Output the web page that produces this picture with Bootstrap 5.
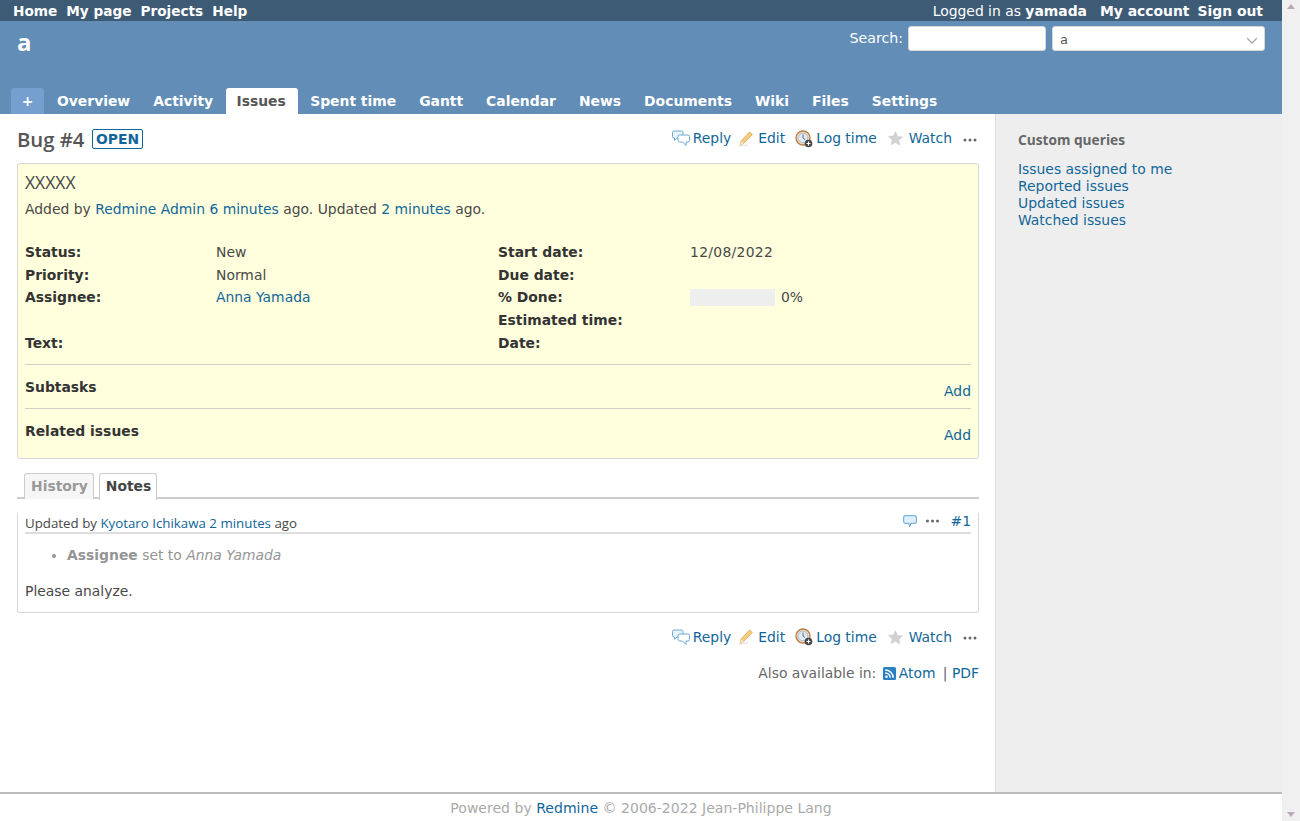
<!DOCTYPE html>
<html lang="en">
<head>
<meta charset="utf-8">
<title>Bug #4</title>
<link href="https://cdn.jsdelivr.net/npm/bootstrap@5.3.0/dist/css/bootstrap.min.css" rel="stylesheet">
<style>
html,body{height:821px;overflow:hidden}
body{font-family:"DejaVu Sans",Verdana,sans-serif;font-size:13.9px;line-height:17px;color:#484848;background:#fff}
a{color:#169;text-decoration:none}
.rm-shell{height:821px}
.rm-page{width:1282px;height:821px}
.rm-bar{width:18px;background:#f0f0f0;padding:4px 0}
.rm-up{width:0;height:0;border:4px solid transparent;border-top:0;border-bottom:5px solid #b9a9b9}
.rm-down{width:0;height:0;border:4px solid transparent;border-bottom:0;border-top:5px solid #b9a9b9}
.rm-top{height:21px;background:#3e5b76;color:#fff;padding:0 19px 0 13px;line-height:23px}
.rm-top a{color:#fff;font-weight:700}
.rm-menu{gap:9px;font-size:13.65px}
.rm-user{gap:8px}
.rm-logged{margin-right:5px}
.rm-head{height:93px;background:#628db6;color:#fff}
.rm-title{font-family:"Open Sans",sans-serif;font-size:24px;font-weight:700;line-height:32px;margin-top:5px;padding-left:17px}
.rm-search{margin-top:5px;padding-right:17px}
.rm-label{margin-top:4px;margin-right:5px;font-size:14.2px}
.rm-input{width:138px;height:25px;background:#fff;border:1px solid #d7d7d7;border-radius:3px;margin-right:6px}
.rm-select{width:213px;height:25px;background:#fff;border:1px solid #d7d7d7;border-radius:3px;color:#555;padding:0 7px;line-height:25px;font-size:13px}
.rm-tabs{padding-left:11px;height:26px;gap:3px}
.rm-tabs a{color:#fff;font-weight:700;padding:0 10px;line-height:27px;display:block;border-radius:3px 3px 0 0}
.rm-tabs a.rm-on{background:#fff;color:#555;width:72px;text-align:center;margin-right:-2px;padding:0 2px 0 0}
.rm-tabs a.rm-on+a{padding-left:11px}
.rm-tabs a.rm-plus{background:#759fcf;width:33px;padding:0;text-align:center}
.rm-body{height:678px}
.rm-main{width:995px;padding:0 16px 0 17px}
.rm-side{width:287px;background:#eee;border-left:1px solid #ddd;padding:17px 22px}
.rm-side h3{font-family:"Open Sans",sans-serif;font-size:13.7px;font-weight:700;color:#666;line-height:18px;margin:0 0 12px}
.rm-side a{display:block;line-height:17px}
.rm-hrow{height:39px;padding-top:10px}
.rm-h2{font-family:"Open Sans",sans-serif;font-size:20.3px;font-weight:600;color:#555;margin:0;line-height:26px}
.rm-badge{border:1px solid #169;color:#169;font-weight:700;line-height:18px;padding:0 2.500px;border-radius:2px;margin:1px 0 0 8px}
.rm-act{display:inline-flex;align-items:center;gap:3px}
.rm-act svg{display:block}
.rm-act.rm-e{gap:5px;margin-left:7px}
.rm-act.rm-l{margin-left:10px}
.rm-act.rm-w{margin-left:11px;gap:6px}
.rm-more{margin:2px 2px 0 11px}
.rm-box{background:#ffd;border:1px solid #d7d7d7;border-radius:3px;padding:6px 7px;margin-top:10px;height:296px}
.rm-subject{font-family:"Open Sans",sans-serif;font-size:17.5px;line-height:24px;color:#444;height:31px}
.rm-attrs{margin-top:23px;display:grid;grid-template-columns:191px 282px 192px 1fr;grid-auto-rows:22.8px;align-items:center}
.rm-attrs b{font-weight:700;color:#333}
.rm-date{letter-spacing:.3px}
.rm-prog{display:inline-block;width:85px;height:17px;background:#eee;vertical-align:top;margin-right:6px}
.rm-rule{border-top:1px solid #d0d0c8;margin-top:9px;height:44px;padding-top:14px}
.rm-rule+.rm-rule{margin-top:0}
.rm-rule b{color:#333}
.rm-rule a{padding-top:4px}
.rm-tabbar{margin-top:14px;border-bottom:2px solid #ccc;height:26px;padding-left:7px;gap:5px}
.rm-tab{height:26px;border:1px solid #ccc;border-bottom:0;border-radius:3px 3px 0 0;padding:0 5px 0 6px;font-weight:700;color:#999;line-height:25px;background:#f6f6f6}
.rm-tab.rm-on{background:#fff;color:#444;height:27px}
.rm-note{margin-top:14px;border:1px solid #d7d7d7;border-top:0;border-radius:0 0 3px 3px;height:100px;padding:0 7px}
.rm-nh{border-bottom:2px solid #ddd;height:21px;line-height:20px}
.rm-who{font-family:"Open Sans",sans-serif;font-size:13.3px}
.rm-num{margin-left:11px;line-height:16px}
.rm-nact{margin-top:-3px}
.rm-detail{margin:13px 0 0;padding-left:42px;color:#959595;height:24px}
.rm-detail b{color:#959595}
.rm-para{margin:12px 0 0}
.rm-bottom{margin-top:15px}
.rm-also{margin-top:19px;color:#666}
.rm-rss{margin:0 3px 0 2px}
.rm-sep{margin-left:3px}
.rm-foot{height:29px;border-top:2px solid #bbb;background:#fff;text-align:center;color:#aaa;line-height:29px;font-size:14.05px;width:1282px}
</style>
</head>
<body>
<svg width="0" height="0" class="position-absolute">
<defs>
<symbol id="i-reply" viewBox="0 0 18 17"><path d="M2 1h7.500a1.500 1.500 0 0 1 1.500 1.500v4a1.500 1.500 0 0 1-1.500 1.500H5l-2.500 2.200V8H2A1.500 1.500 0 0 1 .5 6.500v-4A1.500 1.500 0 0 1 2 1z" fill="#e9f4fb" stroke="#6fa9d2"/><path d="M7.500 5h8.500a1.500 1.500 0 0 1 1.500 1.500v4a1.500 1.500 0 0 1-1.500 1.500h-2v3.500L10.500 12h-3A1.500 1.500 0 0 1 6 10.500v-4A1.500 1.500 0 0 1 7.500 5z" fill="#fff" stroke="#6fa9d2"/></symbol>
<symbol id="i-edit" viewBox="0 0 15 16"><path d="M1 15l9-1" stroke="#e8e8e4" stroke-width="1.500"/><path d="M11.500 1l2.800 2.500L5.500 12.500 2 14l1-3.800z" fill="#f5cf80" stroke="#dba24a" stroke-width=".8"/><path d="M2 14l1-3.800 2.500 2.300z" fill="#f8ead0"/></symbol>
<symbol id="i-time" viewBox="0 0 18 18"><circle cx="8" cy="8" r="7" fill="#f3d9b8" stroke="#b9804e" stroke-width="1.400"/><circle cx="8" cy="8" r="4.800" fill="#dcebf6" stroke="#8aa8c0" stroke-width=".6"/><path d="M8 4.500V8l2 1.500" fill="none" stroke="#667" stroke-width="1"/><circle cx="13.500" cy="13.500" r="3.800" fill="#444"/><path d="M11.500 13.500h4M13.500 11.500v4" stroke="#fff" stroke-width="1.200"/></symbol>
<symbol id="i-star" viewBox="0 0 16 16"><path d="M8 .8l2.200 5 5.300.5-4 3.500 1.200 5.300L8 12l-4.700 2.600 1.200-5.300-4-3.500 5.300-.5z" fill="#d2d2d2" stroke="#c4c4c4" stroke-width=".5"/></symbol>
<symbol id="i-dots" viewBox="0 0 14 4"><circle cx="2" cy="2" r="1.500" fill="#666"/><circle cx="7" cy="2" r="1.500" fill="#666"/><circle cx="12" cy="2" r="1.500" fill="#666"/></symbol>
<symbol id="i-bubble" viewBox="0 0 14 13"><path d="M2 .7h10a1.300 1.300 0 0 1 1.300 1.300v5a1.300 1.300 0 0 1-1.300 1.300H8l-1.500 3.500-.5-3.500H2A1.300 1.300 0 0 1 .7 7V2A1.300 1.300 0 0 1 2 .7z" fill="#dff0fa" stroke="#5ea3d3"/></symbol>
<symbol id="i-rss" viewBox="0 0 13 13"><rect width="13" height="13" rx="1.500" fill="#2a7fc0"/><circle cx="3.500" cy="9.800" r="1.300" fill="#fff"/><path d="M2.200 6a5 5 0 0 1 5 4.800M2.200 3a8 8 0 0 1 8 7.800" fill="none" stroke="#fff" stroke-width="1.500"/></symbol>
</defs>
</svg>
<div class="rm-shell d-flex">
<div class="rm-page d-flex flex-column">
  <div class="rm-top d-flex justify-content-between">
    <div class="d-flex rm-menu"><a href="#">Home</a><a href="#">My page</a><a href="#">Projects</a><a href="#">Help</a></div>
    <div class="d-flex rm-user"><span class="rm-logged">Logged in as <a href="#">yamada</a></span><a href="#">My account</a><a href="#">Sign out</a></div>
  </div>
  <div class="rm-head d-flex flex-column">
    <div class="d-flex justify-content-between flex-grow-1">
      <div class="rm-title">a</div>
      <div class="rm-search d-flex align-items-start"><span class="rm-label">Search:</span><div class="rm-input"></div><div class="rm-select d-flex justify-content-between"><span>a</span><svg width="10" height="24" viewBox="0 0 10 24"><path d="M0 11l5 5 5-5" fill="none" stroke="#aaa" stroke-width="1.300"/></svg></div></div>
    </div>
    <div class="rm-tabs d-flex">
      <a class="rm-plus" href="#">+</a><a href="#">Overview</a><a href="#">Activity</a><a class="rm-on" href="#">Issues</a><a href="#">Spent time</a><a href="#">Gantt</a><a href="#">Calendar</a><a href="#">News</a><a href="#">Documents</a><a href="#">Wiki</a><a href="#">Files</a><a href="#">Settings</a>
    </div>
  </div>
  <div class="rm-body d-flex">
    <div class="rm-main">
      <div class="rm-hrow d-flex justify-content-between align-items-center">
        <div class="d-flex align-items-center"><h2 class="rm-h2">Bug #4</h2><span class="rm-badge">OPEN</span></div>
        <div class="d-flex align-items-center">
          <a class="rm-act" href="#"><svg width="18" height="17"><use href="#i-reply"/></svg>Reply</a>
          <a class="rm-act rm-e" href="#"><svg width="15" height="16"><use href="#i-edit"/></svg>Edit</a>
          <a class="rm-act rm-l" href="#"><svg width="18" height="18"><use href="#i-time"/></svg>Log time</a>
          <a class="rm-act rm-w" href="#"><svg width="15" height="15"><use href="#i-star"/></svg>Watch</a>
          <svg class="rm-more" width="14" height="4"><use href="#i-dots"/></svg>
        </div>
      </div>
      <div class="rm-box">
        <div class="rm-subject">XXXXX</div>
        <div>Added by <a href="#">Redmine Admin</a> <a href="#">6 minutes</a> ago. Updated <a href="#">2 minutes</a> ago.</div>
        <div class="rm-attrs">
          <b>Status:</b><span>New</span><b>Start date:</b><span class="rm-date">12/08/2022</span>
          <b>Priority:</b><span>Normal</span><b>Due date:</b><span></span>
          <b>Assignee:</b><a href="#">Anna Yamada</a><b>% Done:</b><span><span class="rm-prog"></span>0%</span>
          <span></span><span></span><b>Estimated time:</b><span></span>
          <b>Text:</b><span></span><b>Date:</b><span></span>
        </div>
        <div class="rm-rule d-flex justify-content-between"><b>Subtasks</b><a href="#">Add</a></div>
        <div class="rm-rule d-flex justify-content-between"><b>Related issues</b><a href="#">Add</a></div>
      </div>
      <div class="rm-tabbar d-flex">
        <div class="rm-tab">History</div><div class="rm-tab rm-on">Notes</div>
      </div>
      <div class="rm-note">
        <div class="rm-nh d-flex justify-content-between"><span class="rm-who">Updated by <a href="#">Kyotaro Ichikawa</a> <a href="#">2 minutes</a> ago</span>
          <span class="rm-nact d-flex align-items-center"><svg width="14" height="13"><use href="#i-bubble"/></svg><svg class="ms-2" width="15" height="4"><use href="#i-dots"/></svg><a class="rm-num" href="#">#1</a></span></div>
        <ul class="rm-detail"><li><b>Assignee</b> set to <i>Anna Yamada</i></li></ul>
        <p class="rm-para">Please analyze.</p>
      </div>
      <div class="rm-bottom d-flex align-items-center justify-content-end">
          <a class="rm-act" href="#"><svg width="18" height="17"><use href="#i-reply"/></svg>Reply</a>
          <a class="rm-act rm-e" href="#"><svg width="15" height="16"><use href="#i-edit"/></svg>Edit</a>
          <a class="rm-act rm-l" href="#"><svg width="18" height="18"><use href="#i-time"/></svg>Log time</a>
          <a class="rm-act rm-w" href="#"><svg width="15" height="15"><use href="#i-star"/></svg>Watch</a>
          <svg class="rm-more" width="14" height="4"><use href="#i-dots"/></svg>
      </div>
      <div class="rm-also d-flex justify-content-end align-items-center">Also available in:&nbsp;<svg class="rm-rss" width="13" height="13"><use href="#i-rss"/></svg><a href="#">Atom</a><span class="rm-sep">&nbsp;|&nbsp;</span><a href="#">PDF</a></div>
    </div>
    <div class="rm-side">
      <h3>Custom queries</h3>
      <a href="#">Issues assigned to me</a><a href="#">Reported issues</a><a href="#">Updated issues</a><a href="#">Watched issues</a>
    </div>
  </div>
  <div class="rm-foot">Powered by <a href="#">Redmine</a> © 2006-2022 Jean-Philippe Lang</div>
</div>
<div class="rm-bar d-flex flex-column justify-content-between align-items-center"><div class="rm-up"></div><div class="rm-down"></div></div>
</div>
<script src="https://cdn.jsdelivr.net/npm/bootstrap@5.3.0/dist/js/bootstrap.bundle.min.js"></script>
</body>
</html>
